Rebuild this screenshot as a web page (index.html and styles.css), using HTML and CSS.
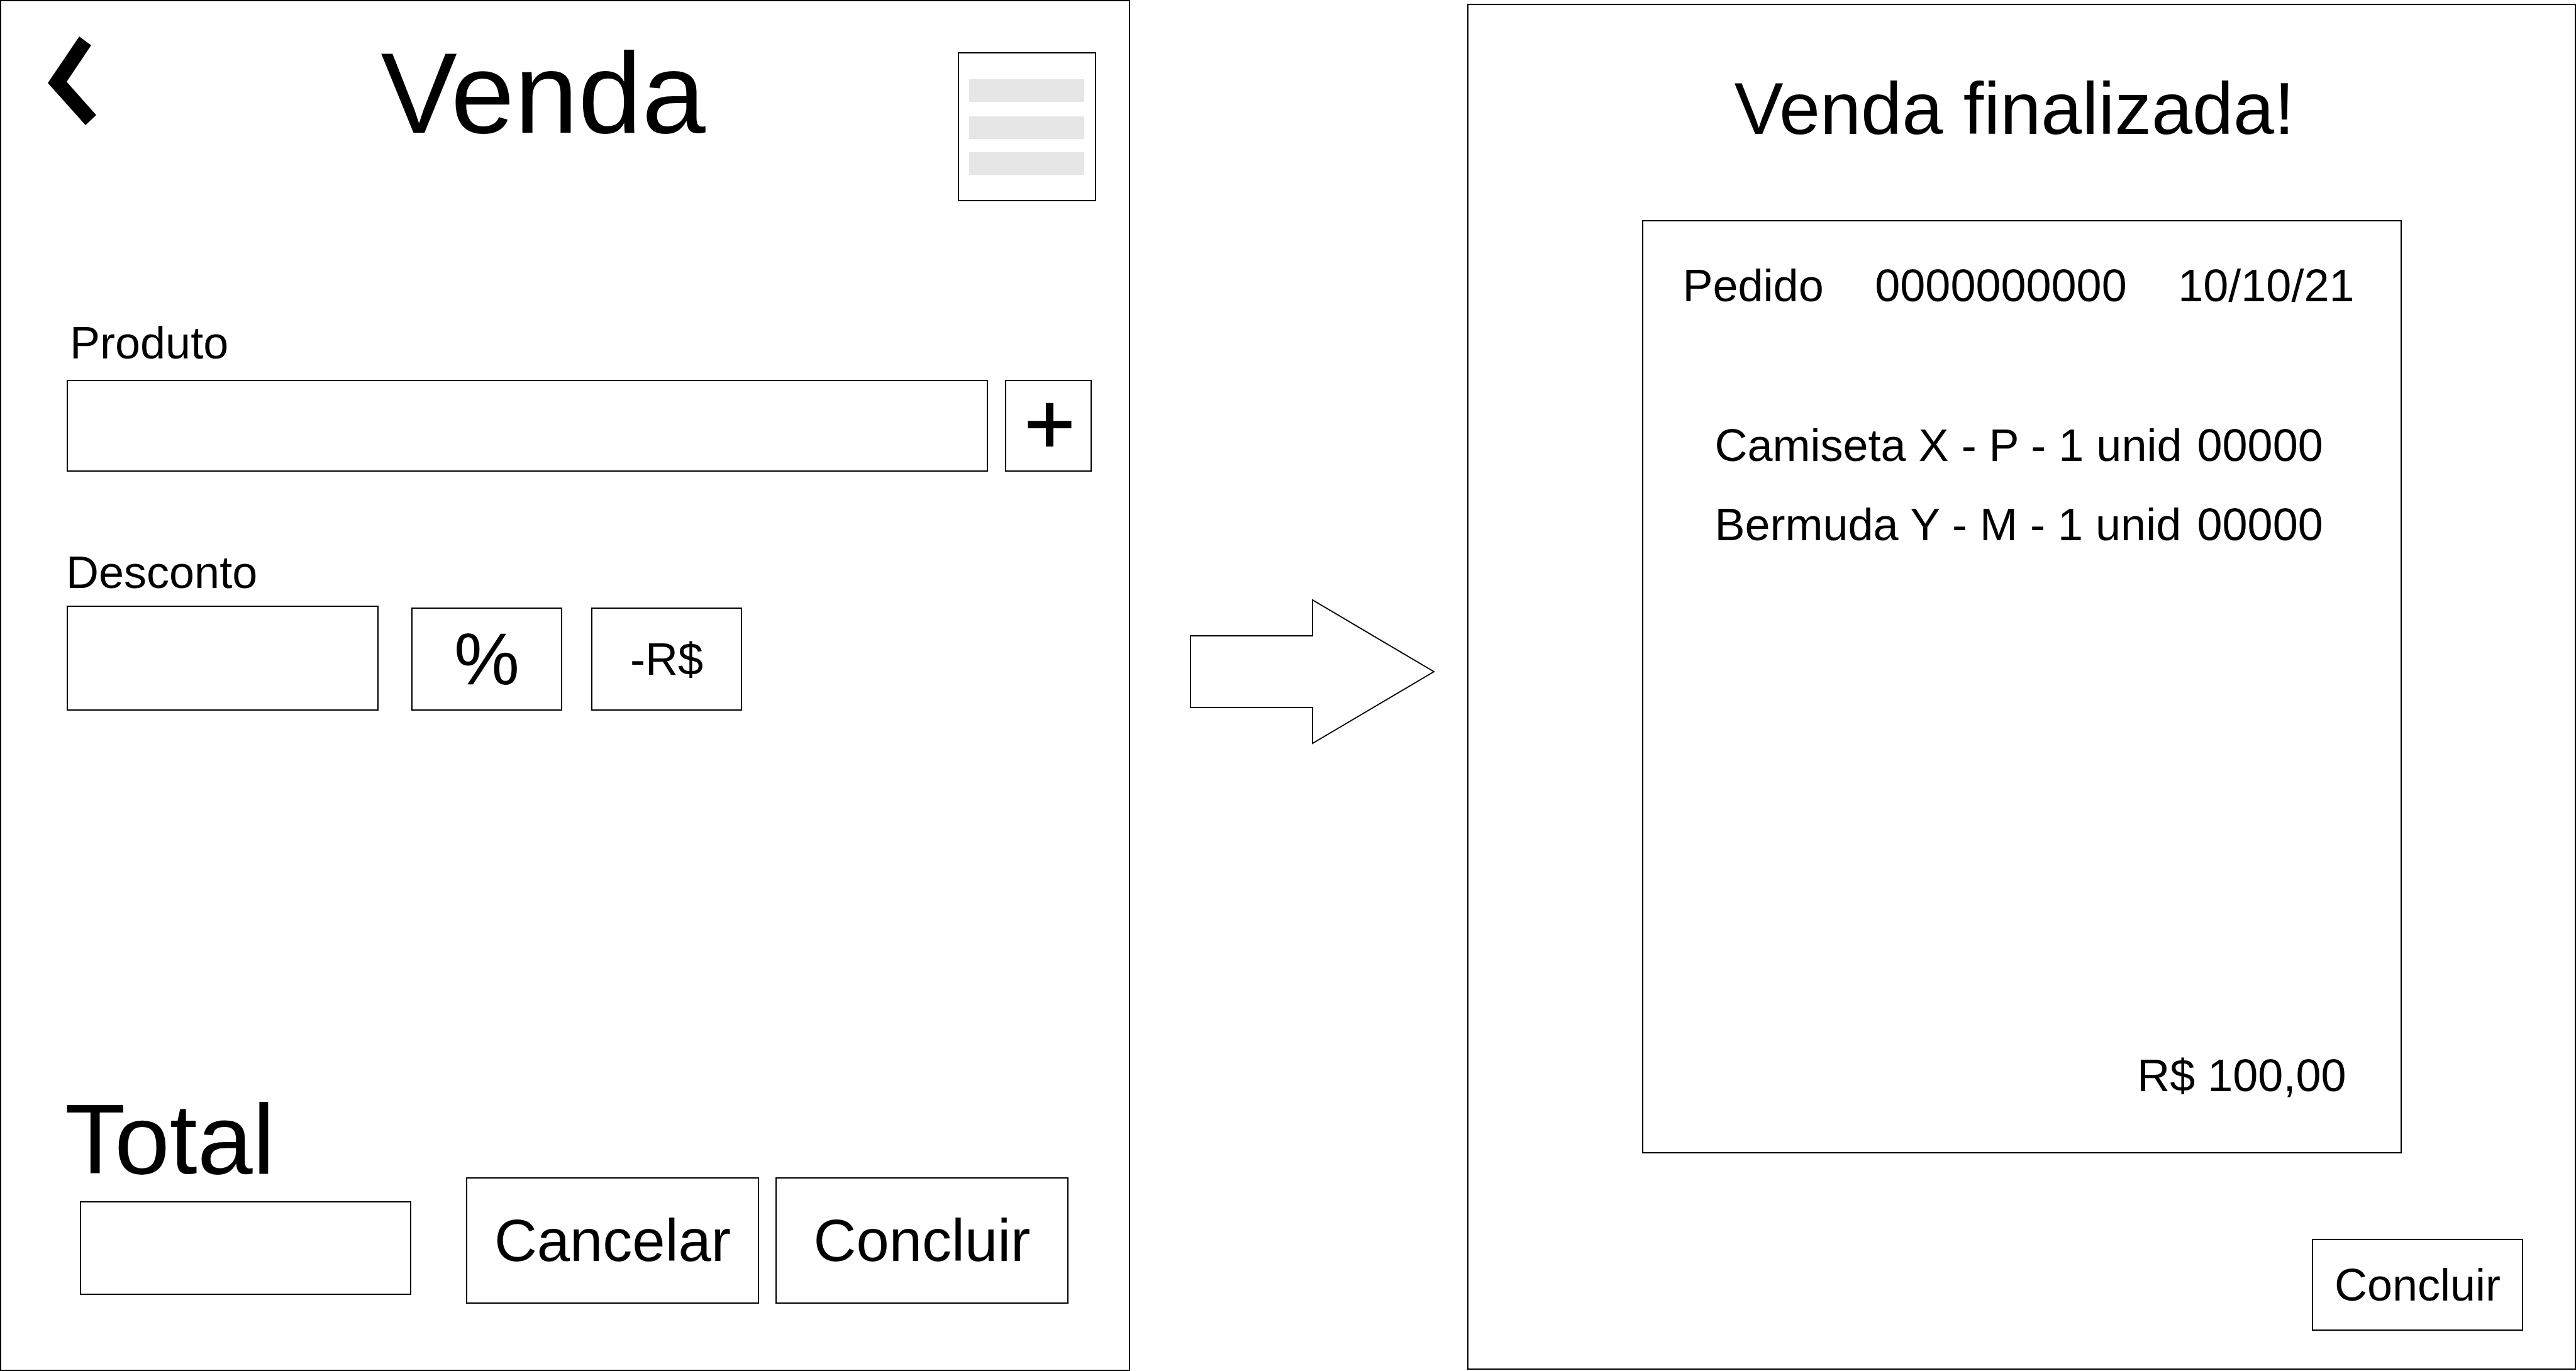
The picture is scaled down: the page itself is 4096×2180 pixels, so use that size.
FILE: index.html
```html
<!DOCTYPE html>
<html lang="pt-BR">
<head>
  <meta charset="utf-8">
  <meta name="viewport" content="width=device-width, initial-scale=1">
  <title>Venda</title>
  <link rel="stylesheet" href="styles.css">
</head>
<body>
  <main class="flow">
    <section class="screen sale">
      <header class="sale-header">
        <button class="back" type="button" aria-label="Voltar">
          <svg width="78" height="142" viewBox="0 0 78 142" aria-hidden="true">
            <path d="M50 0 69 14 30 72 77 125 60 141 0 74Z"/>
          </svg>
        </button>
        <h1 class="sale-title">Venda</h1>
        <button class="menu" type="button" aria-label="Menu">
          <svg width="183" height="152" viewBox="0 0 183 152" aria-hidden="true">
            <path d="M0 0h183v36H0zM0 59h183v36H0zM0 116h183v36H0z"/>
          </svg>
        </button>
      </header>

      <form class="sale-form">
        <label class="label label-product" for="produto">Produto</label>
        <div class="row row-product">
          <input class="box product-input" id="produto" type="text">
          <button class="box add" type="button">+</button>
        </div>

        <label class="label label-discount" for="desconto">Desconto</label>
        <div class="row row-discount">
          <input class="box discount-input" id="desconto" type="text">
          <div class="units">
            <button class="box unit unit-percent" type="button">%</button>
            <button class="box unit" type="button">-R$</button>
          </div>
        </div>

        <footer class="sale-footer">
          <div class="total">
            <label class="total-label" for="total">Total</label>
            <input class="box total-input" id="total" type="text">
          </div>
          <div class="actions">
            <button class="box action" type="button">Cancelar</button>
            <button class="box action" type="button">Concluir</button>
          </div>
        </footer>
      </form>
    </section>

    <div class="next">
      <svg width="390" height="232" viewBox="0 0 390 232" aria-hidden="true">
        <path d="M1 59H195V2L388 116 195 230V173H1Z" fill="none" stroke="#000" stroke-width="2"/>
      </svg>
    </div>

    <section class="screen done">
      <h2 class="done-title">Venda finalizada!</h2>
      <article class="receipt">
        <div class="receipt-head">
          <span>Pedido</span>
          <span>0000000000</span>
          <time datetime="2021-10-10">10/10/21</time>
        </div>
        <table class="items">
          <tbody>
            <tr><td>Camiseta X - P - 1 unid</td><td>00000</td></tr>
            <tr><td>Bermuda Y - M - 1 unid</td><td>00000</td></tr>
          </tbody>
        </table>
        <p class="receipt-total">R$ 100,00</p>
      </article>
      <button class="box finish" type="button">Concluir</button>
    </section>
  </main>
</body>
</html>
```
FILE: styles.css
```css
* {
  box-sizing: border-box;
}

body {
  margin: 0;
  background: #fff;
  color: #000;
  font-family: "Liberation Sans", Arial, sans-serif;
  font-size: 72px;
  line-height: 84px;
}

h1, h2, p {
  margin: 0;
  font-weight: 400;
}

button, input {
  margin: 0;
  padding: 0;
  border: 0;
  border-radius: 0;
  background: none;
  color: inherit;
  font: inherit;
}

svg {
  display: block;
}

.flow {
  display: grid;
  grid-template-columns: 1797fr 536fr 1763fr;
  min-height: 100vh;
}

.screen {
  display: flex;
  flex-direction: column;
  border: 2px solid #000;
}

.box {
  border: 2px solid #000;
}

/* Sale screen */

.sale {
  padding: 46px 52px 105px 74px;
}

.sale-header {
  display: grid;
  grid-template-columns: 128px 1fr auto;
  align-items: start;
}

.back {
  padding: 10px 0;
}

.sale-title {
  font-size: 182px;
  line-height: 200px;
  text-align: center;
}

.menu {
  width: 220px;
  height: 237px;
  margin-top: 35px;
  padding: 0 16px;
  border: 2px solid #000;
  fill: #e6e6e6;
}

.sale-form {
  display: flex;
  flex: 1;
  flex-direction: column;
  padding: 183px 7px 0 27px;
}

.label-product {
  padding-left: 8px;
  margin-bottom: 17px;
}

.label-discount {
  padding-left: 2px;
  margin: 118px 0 11px;
}

.row {
  display: flex;
  align-items: flex-end;
  padding-left: 3px;
}

.row-product {
  gap: 27px;
}

.product-input {
  flex: 1;
  min-width: 0;
  height: 146px;
  padding: 0 24px;
}

.add {
  width: 138px;
  height: 146px;
  padding: 0 0 8px 4px;
  font-size: 138px;
  -webkit-text-stroke: 2px #000;
}

.row-discount {
  gap: 52px;
}

.discount-input {
  width: 496px;
  height: 167px;
  padding: 0 24px;
}

.units {
  display: flex;
  gap: 46px;
}

.unit {
  width: 240px;
  height: 164px;
}

.unit-percent {
  font-size: 117px;
}

.sale-footer {
  display: flex;
  align-items: flex-end;
  gap: 87px;
  margin-top: auto;
}

.total {
  display: flex;
  flex-direction: column;
  gap: 11px;
  padding-bottom: 14px;
}

.total-label {
  font-size: 158px;
  line-height: 176px;
}

.total-input {
  width: 527px;
  height: 149px;
  margin-left: 24px;
  padding: 0 24px;
}

.actions {
  display: flex;
  gap: 26px;
}

.action {
  width: 466px;
  height: 201px;
  font-size: 94px;
}

/* Arrow between the screens */

.next {
  display: flex;
  align-items: center;
  justify-content: center;
  padding: 0 0 44px 44px;
}

/* Finished sale screen */

.done {
  align-items: center;
  margin: 6px 0 2px;
  padding: 98px 82px 60px;
}

.done-title {
  padding-right: 23px;
  margin-bottom: 110px;
  font-size: 117px;
  line-height: 134px;
}

.receipt {
  display: flex;
  flex: 1;
  flex-direction: column;
  width: 1208px;
  padding: 60px 73px 80px 63px;
  border: 2px solid #000;
}

.receipt-head {
  display: flex;
  justify-content: space-between;
}

.items {
  align-self: flex-start;
  margin: 170px 0 0 51px;
  border-collapse: collapse;
}

.items td {
  padding: 0 24px 42px 0;
}

.receipt-total {
  align-self: flex-end;
  margin: auto 13px 0 0;
}

.finish {
  align-self: flex-end;
  width: 336px;
  height: 146px;
  margin-top: 136px;
}
```
